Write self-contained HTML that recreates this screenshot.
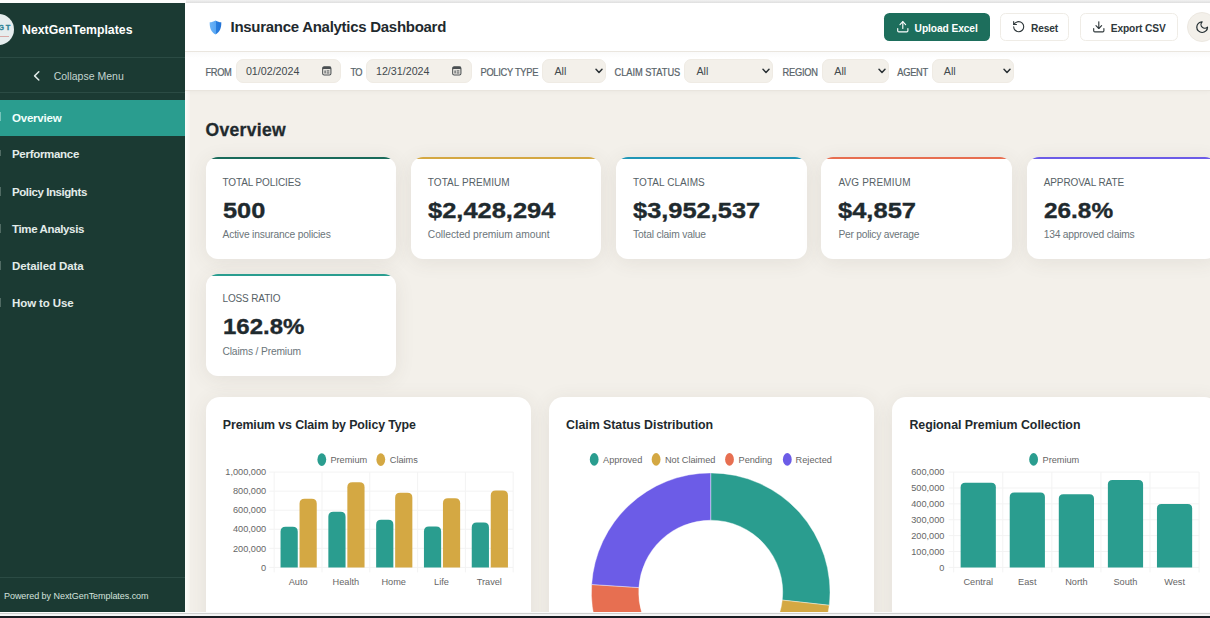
<!DOCTYPE html>
<html>
<head>
<meta charset="utf-8">
<title>Insurance Analytics Dashboard</title>
<style>
*{box-sizing:border-box;margin:0;padding:0}
html,body{width:1210px;height:618px;overflow:hidden;background:#f3f0ea;font-family:"Liberation Sans",sans-serif;color:#1f2a2e}
.abs{position:absolute}
span.abs,div.t,div.l,div.v,div.s{white-space:nowrap}
#topstrip{left:0;top:0;width:1210px;height:3px;background:#fcfcfc}
#topstrip2{left:185.5px;top:0;width:1025px;height:2.8px;background:linear-gradient(#f2f2f2,#dedede)}
#bottomlight{left:0;top:612px;width:1210px;height:4px;background:#f3f4f4;border-top:1px solid #fafafa}
#bottomgray{left:0;top:613px;width:1210px;height:1.1px;background:#cfd0d0}
#bottomdark{left:0;top:615.8px;width:1210px;height:3px;background:#191c22}
#side{left:0;top:3px;width:185px;height:609px;background:#1b3a33;overflow:hidden}
#logo{left:-18px;top:10.7px;width:31.6px;height:31.6px;border-radius:50%;background:#e6edee;overflow:hidden}
#brand{left:22px;top:19px;color:#fff;font-weight:bold;font-size:12.3px;white-space:nowrap;line-height:16px}
.sdiv{left:0;width:185px;height:1px;background:#2b4b44}
#collapse{left:53.7px;top:65px;color:#c3d5d0;font-size:10.5px;line-height:16px;white-space:nowrap}
.nav{left:0;width:185px;height:37px;color:#e3ecea;font-weight:bold;font-size:11.5px;line-height:37px;padding-left:12px;white-space:nowrap}
.nav.active{background:#2a9d8f;color:#f2fffc;height:36.6px}
.nic{left:0;width:1.2px;height:9px;background:#9fb3ad;opacity:.4}
#foot{left:4px;top:586.5px;color:#d5e2de;font-size:9px;white-space:nowrap;line-height:12px;letter-spacing:-.05px}
#head{left:185px;top:3px;width:1025px;height:49px;background:#fff;border-bottom:1px solid #ebe7e0}
#filters{left:185px;top:52px;width:1025px;height:38px;background:linear-gradient(#fafafa,#fff 6px);box-shadow:0 1px 0 #e9e5de,0 2px 4px rgba(0,0,0,.035)}
#vstrip{left:185px;top:91px;width:4.5px;height:521px;background:linear-gradient(90deg,#fbfdfb,#f6f3ee)}
#title{left:230.5px;top:16.5px;font-weight:bold;font-size:15px;line-height:20px;white-space:nowrap;color:#1f2a2e;letter-spacing:-.28px}
.btn{top:13px;height:27.5px;border-radius:5.5px;font-weight:bold;font-size:10.2px;line-height:27.5px;white-space:nowrap}
.btn.ghost{background:#fff;border:1px solid #efece6;color:#2f383b}
.lbl{top:66.6px;transform:scaleY(1.14);font-size:9.3px;letter-spacing:-.2px;color:#59646a;-webkit-text-stroke:.2px #59646a;line-height:12px;white-space:nowrap}
.inp{top:59.3px;height:23.7px;border-radius:7px;background:#f3f0ea;font-size:10.7px;line-height:23.7px;color:#41494d;white-space:nowrap;border:1px solid #efebe4}
#h1{left:205.6px;top:117.8px;font-weight:bold;font-size:17.5px;line-height:24px;color:#1f2a2e;white-space:nowrap;letter-spacing:.3px;-webkit-text-stroke:.3px #1f2a2e}
.kpi{width:190.6px;height:102px;background:#fff;border-radius:12px;box-shadow:0 3px 20px rgba(80,70,50,.09);overflow:hidden}
.kpi .b{position:absolute;left:0;top:0;width:100%;height:2.4px}
.kpi .l{position:absolute;left:17px;top:19.8px;font-size:10px;letter-spacing:.06px;color:#566166;line-height:12px}
.kpi .v{position:absolute;left:17px;top:40.6px;font-size:22px;font-weight:bold;color:#1f2a2e;line-height:26px;transform-origin:0 50%;transform:scaleX(1.15);-webkit-text-stroke:.35px #1f2a2e}
.kpi .s{position:absolute;left:17px;top:71.1px;font-size:10.25px;color:#6b757a;line-height:14px;letter-spacing:-.06px}
.card{top:397.3px;width:325.6px;height:240px;background:#fff;border-radius:14px;box-shadow:0 3px 20px rgba(80,70,50,.09)}
.card .t{position:absolute;left:17.3px;top:18.7px;font-weight:bold;font-size:12.4px;color:#1f2a2e;line-height:18px}
svg text{font-family:"Liberation Sans",sans-serif;font-size:9.2px;fill:#666}
svg{overflow:visible}
</style>
</head>
<body>
<div class="abs" id="topstrip"></div><div class="abs" id="topstrip2"></div>
<div class="abs" id="side">
<div class="abs" id="logo"><span class="abs" style="left:9.2px;top:10.8px;font-size:7.4px;font-weight:bold;color:#2f8496;-webkit-text-stroke:.3px #2f8496;letter-spacing:1.7px;line-height:8px">NGT</span><div class="abs" style="left:6px;top:22.6px;width:21.3px;height:1.1px;background:#d8a9a6"></div></div>
<div class="abs" id="brand">NextGenTemplates</div>
<div class="abs sdiv" style="top:54.3px"></div>
<svg class="abs" style="left:32px;top:66.5px" width="9" height="12" viewBox="0 0 9 12"><path d="M6.8 1.8 L2.6 5.9 L6.8 10" fill="none" stroke="#dfeae7" stroke-width="1.5" stroke-linecap="round" stroke-linejoin="round"/></svg>
<div class="abs" id="collapse">Collapse Menu</div>
<div class="abs sdiv" style="top:88.7px"></div>
<div class="abs nav active" style="top:96.5px;letter-spacing:-.22px">Overview</div>
<div class="abs nav" style="top:133.4px;letter-spacing:-.3px">Performance</div>
<div class="abs nav" style="top:170.5px;letter-spacing:-.42px">Policy Insights</div>
<div class="abs nav" style="top:207.6px;letter-spacing:-.36px">Time Analysis</div>
<div class="abs nav" style="top:244.7px;letter-spacing:-.1px">Detailed Data</div>
<div class="abs nav" style="top:281.8px;letter-spacing:-.1px">How to Use</div>
<div class="abs nic" style="top:109px;background:#e9fffb"></div>
<div class="abs nic" style="top:147px;height:6px"></div>
<div class="abs nic" style="top:184px"></div>
<div class="abs nic" style="top:221px"></div>
<div class="abs nic" style="top:258px"></div>
<div class="abs nic" style="top:295px"></div>
<div class="abs sdiv" style="top:574px"></div>
<div class="abs" id="foot">Powered by NextGenTemplates.com</div>
</div>
<div class="abs" id="vstrip"></div><div class="abs" id="head"></div><div class="abs" id="filters"></div>
<svg class="abs" style="left:208.8px;top:20.2px" width="13" height="14.8" viewBox="0 0 13 14.8"><defs><linearGradient id="sg" x1="0" x2="1" y1="0" y2="0"><stop offset="0" stop-color="#6cb4f7"/><stop offset=".5" stop-color="#5aa7f3"/><stop offset=".5" stop-color="#2a80e0"/><stop offset="1" stop-color="#2273d6"/></linearGradient></defs><path d="M6.5 .4 C4.6 1.6 2.6 2.1 .7 2.2 C.5 7.5 2 12 6.5 14.4 C11 12 12.5 7.5 12.3 2.2 C10.4 2.1 8.4 1.6 6.5 .4Z" fill="url(#sg)"/></svg>
<div class="abs" id="title">Insurance Analytics Dashboard</div>
<div class="abs btn" style="left:884px;width:106px;background:#1d6e5c;color:#fff"><span class="abs" style="left:30.6px;top:1.7px;letter-spacing:-.07px">Upload Excel</span></div>
<svg class="abs" style="left:895.9px;top:20.2px" width="13.6" height="13.6" viewBox="0 0 24 24" fill="none" stroke="#fff" stroke-width="2" stroke-linecap="round" stroke-linejoin="round"><path d="M21 15v4a2 2 0 0 1-2 2H5a2 2 0 0 1-2-2v-4"/><polyline points="17 8 12 3 7 8"/><line x1="12" y1="3" x2="12" y2="15"/></svg>
<div class="abs btn ghost" style="left:1000.3px;width:69px"><span class="abs" style="left:29.8px;top:.8px;letter-spacing:-.2px">Reset</span></div>
<svg class="abs" style="left:1012px;top:20.1px" width="13.4" height="13.4" viewBox="0 0 24 24" fill="none" stroke="#2f383b" stroke-width="2" stroke-linecap="round" stroke-linejoin="round"><path d="M3 12a9 9 0 1 0 9-9 9.75 9.75 0 0 0-6.74 2.74L3 8"/><path d="M3 3v5h5"/></svg>
<div class="abs btn ghost" style="left:1079.5px;width:98px"><span class="abs" style="left:30.2px;top:.8px;letter-spacing:-.1px">Export CSV</span></div>
<svg class="abs" style="left:1092px;top:20px" width="13.6" height="13.6" viewBox="0 0 24 24" fill="none" stroke="#2f383b" stroke-width="2" stroke-linecap="round" stroke-linejoin="round"><path d="M21 15v4a2 2 0 0 1-2 2H5a2 2 0 0 1-2-2v-4"/><polyline points="7 10 12 15 17 10"/><line x1="12" y1="15" x2="12" y2="3"/></svg>
<div class="abs" style="left:1187.3px;top:12.2px;width:30px;height:30px;border-radius:50%;background:#f3f0ea;border:1px solid #ece8e1"></div>
<svg class="abs" style="left:1194.9px;top:19.85px" width="14.3" height="14.3" viewBox="0 0 24 24" fill="none" stroke="#1f2a2e" stroke-width="2" stroke-linecap="round" stroke-linejoin="round"><path d="M12 3a6 6 0 0 0 9 9 9 9 0 1 1-9-9Z"/></svg>
<div class="abs lbl" style="left:205.4px;letter-spacing:-.3px">FROM</div>
<div class="abs inp" style="left:236.3px;width:105.2px"><span class="abs" style="left:8.6px;top:-.6px">01/02/2024</span></div><svg class="abs" style="left:322px;top:66.3px" width="9.6" height="9.6" viewBox="0 0 10 10"><rect x=".7" y=".9" width="8.6" height="8.4" rx="1.6" fill="none" stroke="#4a4f52" stroke-width="1.1"/><rect x=".7" y=".9" width="8.6" height="2.3" fill="#4a4f52"/><rect x="2.6" y="4.6" width="1.2" height="3.2" fill="#4a4f52"/><rect x="4.8" y="4.6" width="2.9" height="1.1" fill="#4a4f52"/><rect x="4.8" y="6.7" width="2.9" height="1.1" fill="#4a4f52"/></svg>
<div class="abs lbl" style="left:350.6px;letter-spacing:-.8px">TO</div>
<div class="abs inp" style="left:366.4px;width:105.2px"><span class="abs" style="left:8.6px;top:-.6px">12/31/2024</span></div><svg class="abs" style="left:451.8px;top:66.3px" width="9.6" height="9.6" viewBox="0 0 10 10"><rect x=".7" y=".9" width="8.6" height="8.4" rx="1.6" fill="none" stroke="#4a4f52" stroke-width="1.1"/><rect x=".7" y=".9" width="8.6" height="2.3" fill="#4a4f52"/><rect x="2.6" y="4.6" width="1.2" height="3.2" fill="#4a4f52"/><rect x="4.8" y="4.6" width="2.9" height="1.1" fill="#4a4f52"/><rect x="4.8" y="6.7" width="2.9" height="1.1" fill="#4a4f52"/></svg>
<div class="abs lbl" style="left:480.5px;letter-spacing:-0.28px">POLICY TYPE</div>
<div class="abs inp" style="left:542.2px;width:63.8px"><span class="abs" style="left:11.3px;top:-.6px">All</span></div><svg class="abs" style="left:594.5px;top:68.4px" width="8" height="6" viewBox="0 0 8 6"><path d="M1 1.2 L4 4.4 L7 1.2" fill="none" stroke="#2b3236" stroke-width="1.5" stroke-linecap="round" stroke-linejoin="round"/></svg>
<div class="abs lbl" style="left:614.5px;letter-spacing:-0.05px">CLAIM STATUS</div>
<div class="abs inp" style="left:684.2px;width:89.3px"><span class="abs" style="left:11.3px;top:-.6px">All</span></div><svg class="abs" style="left:762.0px;top:68.4px" width="8" height="6" viewBox="0 0 8 6"><path d="M1 1.2 L4 4.4 L7 1.2" fill="none" stroke="#2b3236" stroke-width="1.5" stroke-linecap="round" stroke-linejoin="round"/></svg>
<div class="abs lbl" style="left:782.6px;letter-spacing:-0.28px">REGION</div>
<div class="abs inp" style="left:822px;width:67px"><span class="abs" style="left:11.3px;top:-.6px">All</span></div><svg class="abs" style="left:877.5px;top:68.4px" width="8" height="6" viewBox="0 0 8 6"><path d="M1 1.2 L4 4.4 L7 1.2" fill="none" stroke="#2b3236" stroke-width="1.5" stroke-linecap="round" stroke-linejoin="round"/></svg>
<div class="abs lbl" style="left:897.3px;letter-spacing:-0.3px">AGENT</div>
<div class="abs inp" style="left:931.5px;width:82.8px"><span class="abs" style="left:11.3px;top:-.6px">All</span></div><svg class="abs" style="left:1002.8px;top:68.4px" width="8" height="6" viewBox="0 0 8 6"><path d="M1 1.2 L4 4.4 L7 1.2" fill="none" stroke="#2b3236" stroke-width="1.5" stroke-linecap="round" stroke-linejoin="round"/></svg>
<div class="abs" id="h1">Overview</div>
<div class="abs kpi" style="left:205.5px;top:157px"><div class="b" style="background:#1a6b5a"></div><div class="l" style="letter-spacing:-0.11px">TOTAL POLICIES</div><div class="v" style="transform:scaleX(1.152)">500</div><div class="s" style="letter-spacing:-0.166px">Active insurance policies</div></div>
<div class="abs kpi" style="left:410.8px;top:157px"><div class="b" style="background:#d4a843"></div><div class="l" style="letter-spacing:0.08px">TOTAL PREMIUM</div><div class="v" style="transform:scaleX(1.157)">$2,428,294</div><div class="s" style="letter-spacing:-0.03px">Collected premium amount</div></div>
<div class="abs kpi" style="left:616.1px;top:157px"><div class="b" style="background:#2196b6"></div><div class="l" style="letter-spacing:0.06px">TOTAL CLAIMS</div><div class="v" style="transform:scaleX(1.155)">$3,952,537</div><div class="s" style="letter-spacing:-0.18px">Total claim value</div></div>
<div class="abs kpi" style="left:821.4px;top:157px"><div class="b" style="background:#e76f51"></div><div class="l" style="letter-spacing:0.17px">AVG PREMIUM</div><div class="v" style="transform:scaleX(1.159)">$4,857</div><div class="s" style="letter-spacing:-0.23px">Per policy average</div></div>
<div class="abs kpi" style="left:1026.7px;top:157px"><div class="b" style="background:#6c5ce7"></div><div class="l" style="letter-spacing:-0.09px">APPROVAL RATE</div><div class="v" style="transform:scaleX(1.107)">26.8%</div><div class="s" style="letter-spacing:-0.2px">134 approved claims</div></div>
<div class="abs kpi" style="left:205.5px;top:273.6px"><div class="b" style="background:#2a9d8f"></div><div class="l" style="letter-spacing:-0.14px">LOSS RATIO</div><div class="v" style="transform:scaleX(1.091)">162.8%</div><div class="s" style="letter-spacing:-0.155px">Claims / Premium</div></div>
<div class="abs card" style="left:205.5px"><div class="t" style="letter-spacing:-.12px">Premium vs Claim by Policy Type</div></div>
<div class="abs card" style="left:548.8px"><div class="t" style="letter-spacing:-.04px">Claim Status Distribution</div></div>
<div class="abs card" style="left:892.1px"><div class="t" style="letter-spacing:-.04px">Regional Premium Collection</div></div>
<svg class="abs" style="left:0;top:0" width="1210" height="612" viewBox="0 0 1210 612"><line x1="269.2" x2="513.2" y1="472.10" y2="472.10" stroke="#f3f3f3" stroke-width="1"/>
<text x="266.2" y="475.30" text-anchor="end">1,000,000</text>
<line x1="269.2" x2="513.2" y1="491.16" y2="491.16" stroke="#f3f3f3" stroke-width="1"/>
<text x="266.2" y="494.36" text-anchor="end">800,000</text>
<line x1="269.2" x2="513.2" y1="510.22" y2="510.22" stroke="#f3f3f3" stroke-width="1"/>
<text x="266.2" y="513.42" text-anchor="end">600,000</text>
<line x1="269.2" x2="513.2" y1="529.28" y2="529.28" stroke="#f3f3f3" stroke-width="1"/>
<text x="266.2" y="532.48" text-anchor="end">400,000</text>
<line x1="269.2" x2="513.2" y1="548.34" y2="548.34" stroke="#f3f3f3" stroke-width="1"/>
<text x="266.2" y="551.54" text-anchor="end">200,000</text>
<line x1="269.2" x2="513.2" y1="567.40" y2="567.40" stroke="#f3f3f3" stroke-width="1"/>
<text x="266.2" y="570.60" text-anchor="end">0</text>
<line x1="274.20" x2="274.20" y1="472.1" y2="572.4" stroke="#f3f3f3" stroke-width="1"/>
<line x1="322.00" x2="322.00" y1="472.1" y2="572.4" stroke="#f3f3f3" stroke-width="1"/>
<line x1="369.80" x2="369.80" y1="472.1" y2="572.4" stroke="#f3f3f3" stroke-width="1"/>
<line x1="417.60" x2="417.60" y1="472.1" y2="572.4" stroke="#f3f3f3" stroke-width="1"/>
<line x1="465.40" x2="465.40" y1="472.1" y2="572.4" stroke="#f3f3f3" stroke-width="1"/>
<line x1="513.20" x2="513.20" y1="472.1" y2="572.4" stroke="#f3f3f3" stroke-width="1"/>
<path d="M280.55 567.40 V531.80 Q280.55 526.80 285.55 526.80 H292.75 Q297.75 526.80 297.75 531.80 V567.40Z" fill="#2a9d8f"/>
<path d="M299.55 567.40 V503.69 Q299.55 498.69 304.55 498.69 H311.75 Q316.75 498.69 316.75 503.69 V567.40Z" fill="#d4a843"/>
<text x="298.10" y="584.7" text-anchor="middle">Auto</text>
<path d="M328.35 567.40 V516.74 Q328.35 511.74 333.35 511.74 H340.55 Q345.55 511.74 345.55 516.74 V567.40Z" fill="#2a9d8f"/>
<path d="M347.35 567.40 V487.20 Q347.35 482.20 352.35 482.20 H359.55 Q364.55 482.20 364.55 487.20 V567.40Z" fill="#d4a843"/>
<text x="345.90" y="584.7" text-anchor="middle">Health</text>
<path d="M376.15 567.40 V524.65 Q376.15 519.65 381.15 519.65 H388.35 Q393.35 519.65 393.35 524.65 V567.40Z" fill="#2a9d8f"/>
<path d="M395.15 567.40 V497.68 Q395.15 492.68 400.15 492.68 H407.35 Q412.35 492.68 412.35 497.68 V567.40Z" fill="#d4a843"/>
<text x="393.70" y="584.7" text-anchor="middle">Home</text>
<path d="M423.95 567.40 V531.61 Q423.95 526.61 428.95 526.61 H436.15 Q441.15 526.61 441.15 531.61 V567.40Z" fill="#2a9d8f"/>
<path d="M442.95 567.40 V503.21 Q442.95 498.21 447.95 498.21 H455.15 Q460.15 498.21 460.15 503.21 V567.40Z" fill="#d4a843"/>
<text x="441.50" y="584.7" text-anchor="middle">Life</text>
<path d="M471.75 567.40 V527.51 Q471.75 522.51 476.75 522.51 H483.95 Q488.95 522.51 488.95 527.51 V567.40Z" fill="#2a9d8f"/>
<path d="M490.75 567.40 V495.49 Q490.75 490.49 495.75 490.49 H502.95 Q507.95 490.49 507.95 495.49 V567.40Z" fill="#d4a843"/>
<text x="489.30" y="584.7" text-anchor="middle">Travel</text>
<ellipse cx="321.8" cy="459.6" rx="4.4" ry="6.3" fill="#2a9d8f"/><text x="330.4" y="462.8">Premium</text>
<ellipse cx="380.8" cy="459.6" rx="4.4" ry="6.3" fill="#d4a843"/><text x="389.8" y="462.8">Claims</text>
<line x1="948.7" x2="1199.1" y1="472.10" y2="472.10" stroke="#f3f3f3" stroke-width="1"/>
<text x="945.1" y="475.30" text-anchor="end" dx="-.7">600,000</text>
<line x1="948.7" x2="1199.1" y1="487.98" y2="487.98" stroke="#f3f3f3" stroke-width="1"/>
<text x="945.1" y="491.18" text-anchor="end" dx="-.7">500,000</text>
<line x1="948.7" x2="1199.1" y1="503.87" y2="503.87" stroke="#f3f3f3" stroke-width="1"/>
<text x="945.1" y="507.07" text-anchor="end" dx="-.7">400,000</text>
<line x1="948.7" x2="1199.1" y1="519.75" y2="519.75" stroke="#f3f3f3" stroke-width="1"/>
<text x="945.1" y="522.95" text-anchor="end" dx="-.7">300,000</text>
<line x1="948.7" x2="1199.1" y1="535.63" y2="535.63" stroke="#f3f3f3" stroke-width="1"/>
<text x="945.1" y="538.83" text-anchor="end" dx="-.7">200,000</text>
<line x1="948.7" x2="1199.1" y1="551.52" y2="551.52" stroke="#f3f3f3" stroke-width="1"/>
<text x="945.1" y="554.72" text-anchor="end" dx="-.7">100,000</text>
<line x1="948.7" x2="1199.1" y1="567.40" y2="567.40" stroke="#f3f3f3" stroke-width="1"/>
<text x="945.1" y="570.60" text-anchor="end" dx="-.7">0</text>
<line x1="953.70" x2="953.70" y1="472.1" y2="572.4" stroke="#f3f3f3" stroke-width="1"/>
<line x1="1002.78" x2="1002.78" y1="472.1" y2="572.4" stroke="#f3f3f3" stroke-width="1"/>
<line x1="1051.86" x2="1051.86" y1="472.1" y2="572.4" stroke="#f3f3f3" stroke-width="1"/>
<line x1="1100.94" x2="1100.94" y1="472.1" y2="572.4" stroke="#f3f3f3" stroke-width="1"/>
<line x1="1150.02" x2="1150.02" y1="472.1" y2="572.4" stroke="#f3f3f3" stroke-width="1"/>
<line x1="1199.10" x2="1199.10" y1="472.1" y2="572.4" stroke="#f3f3f3" stroke-width="1"/>
<path d="M960.64 567.40 V487.16 Q960.64 482.66 965.14 482.66 H991.34 Q995.84 482.66 995.84 487.16 V567.40Z" fill="#2a9d8f"/>
<text x="978.24" y="584.5" text-anchor="middle">Central</text>
<path d="M1009.72 567.40 V496.93 Q1009.72 492.43 1014.22 492.43 H1040.42 Q1044.92 492.43 1044.92 496.93 V567.40Z" fill="#2a9d8f"/>
<text x="1027.32" y="584.5" text-anchor="middle">East</text>
<path d="M1058.80 567.40 V498.84 Q1058.80 494.34 1063.30 494.34 H1089.50 Q1094.00 494.34 1094.00 498.84 V567.40Z" fill="#2a9d8f"/>
<text x="1076.40" y="584.5" text-anchor="middle">North</text>
<path d="M1107.88 567.40 V484.46 Q1107.88 479.96 1112.38 479.96 H1138.58 Q1143.08 479.96 1143.08 484.46 V567.40Z" fill="#2a9d8f"/>
<text x="1125.48" y="584.5" text-anchor="middle">South</text>
<path d="M1156.96 567.40 V508.45 Q1156.96 503.95 1161.46 503.95 H1187.66 Q1192.16 503.95 1192.16 508.45 V567.40Z" fill="#2a9d8f"/>
<text x="1174.56" y="584.5" text-anchor="middle">West</text>
<ellipse cx="1033.6" cy="459.4" rx="4.4" ry="6.3" fill="#2a9d8f"/><text x="1042.5" y="462.59999999999997">Premium</text>
<path d="M710.70 472.90 A119.3 119.3 0 0 1 829.28 605.29 L782.27 600.10 A72.0 72.0 0 0 0 710.70 520.20Z" fill="#2a9d8f" stroke="#fff" stroke-width=".4"/>
<path d="M829.28 605.29 A119.3 119.3 0 0 1 692.97 710.17 L700.00 663.40 A72.0 72.0 0 0 0 782.27 600.10Z" fill="#d4a843" stroke="#fff" stroke-width=".4"/>
<path d="M692.97 710.17 A119.3 119.3 0 0 1 591.65 584.50 L638.85 587.55 A72.0 72.0 0 0 0 700.00 663.40Z" fill="#e76f51" stroke="#fff" stroke-width=".4"/>
<path d="M591.65 584.50 A119.3 119.3 0 0 1 710.70 472.90 L710.70 520.20 A72.0 72.0 0 0 0 638.85 587.55Z" fill="#6c5ce7" stroke="#fff" stroke-width=".4"/>
<ellipse cx="594.2" cy="459.4" rx="4.4" ry="6.3" fill="#2a9d8f"/><text x="603.0" y="462.59999999999997">Approved</text>
<ellipse cx="656.1" cy="459.4" rx="4.4" ry="6.3" fill="#d4a843"/><text x="664.9" y="462.59999999999997">Not Claimed</text>
<ellipse cx="729.5" cy="459.4" rx="4.4" ry="6.3" fill="#e76f51"/><text x="738.5" y="462.59999999999997">Pending</text>
<ellipse cx="787.3" cy="459.4" rx="4.4" ry="6.3" fill="#6c5ce7"/><text x="795.6" y="462.59999999999997">Rejected</text></svg>
<div class="abs" id="bottomlight"></div><div class="abs" id="bottomgray"></div><div class="abs" id="bottomdark"></div>
</body>
</html>
